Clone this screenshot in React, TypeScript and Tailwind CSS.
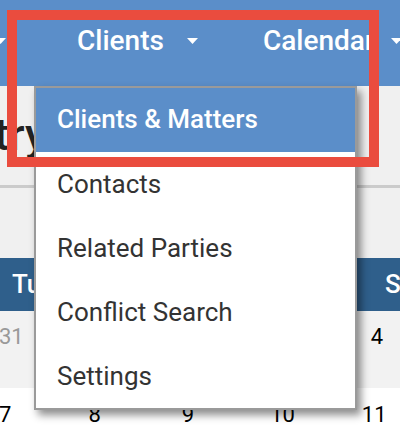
import { Fragment } from 'react';

const font = { fontFamily: 'Roboto, "Noto Sans", sans-serif' };

function Caret() {
  return (
    <svg width="11" height="6" viewBox="0 0 11 6" className="shrink-0">
      <path d="M0 0h11L5.5 6z" fill="#ffffff" />
    </svg>
  );
}

const menuItems = ['Contacts', 'Related Parties', 'Conflict Search', 'Settings'];

export default function App() {
  return (
    <div className="relative w-[400px] h-[442px] overflow-hidden bg-white" style={font}>
      {/* Top nav */}
      <div className="h-[86px] bg-[#5b8ec9] flex items-center text-white font-medium text-[28px] whitespace-nowrap pb-1">
        <div className="-ml-[5px] w-[11px]">
          <Caret />
        </div>
        <span className="ml-[71px]">Clients</span>
        <div className="ml-[23px]">
          <Caret />
        </div>
        <span className="ml-[65px]">Calendar</span>
        <div className="ml-[16px]">
          <Caret />
        </div>
      </div>

      {/* Page heading area */}
      <div className="h-[102px] bg-[#f0f0f0] border-b-[3px] border-[#cbcbcb] flex items-start pt-[27px]">
        <span className="-ml-[55px] text-[44px] font-medium text-[#222] leading-none">Entry</span>
      </div>
      <div className="h-[70px] bg-[#f0f0f0]" />

      {/* Calendar */}
      <div className="h-[53px] bg-[#2f5f8b] text-white font-medium text-[26px] flex items-center">
        <span className="ml-[12px]">Tu</span>
        <span className="ml-auto mr-[-6px] w-[21px]">S</span>
      </div>
      <div className="h-[77px] bg-[#f2f2f2] flex items-start pt-[15px] text-[22px] leading-none">
        <span className="text-[#999] -ml-[1px]">31</span>
        <span className="ml-[347px] text-black">4</span>
      </div>
      <div className="h-[60px] bg-white flex items-start pt-[16px] text-[22px] leading-none text-black">
        {[
          ['7', 'ml-[-1px]'],
          ['8', 'ml-[77px]'],
          ['9', 'ml-[81px]'],
          ['10', 'ml-[76px]'],
          ['11', 'ml-[67px]'],
        ].map(([n, c]) => (
          <Fragment key={n}>
            <span className={c}>{n}</span>
          </Fragment>
        ))}
      </div>

      {/* Dropdown menu */}
      <div className="absolute left-[34px] top-[86px] w-[323px] bg-white border-2 border-[#9a9a9a] shadow-[4px_5px_8px_rgba(0,0,0,0.45)]">
        <div className="h-[64px] bg-[#5b8ec9] text-white text-[26px] font-medium flex items-center pl-[21px] pb-[2px]">
          Clients &amp; Matters
        </div>
        {menuItems.map((m) => (
          <div key={m} className="h-[64px] text-[#333] text-[26px] font-normal flex items-center pl-[21px]">
            {m}
          </div>
        ))}
      </div>

      {/* Highlight box */}
      <div className="absolute left-[7px] top-[10px] w-[372px] h-[157px] border-[10px] border-[#ea4c3e]" />
    </div>
  );
}
